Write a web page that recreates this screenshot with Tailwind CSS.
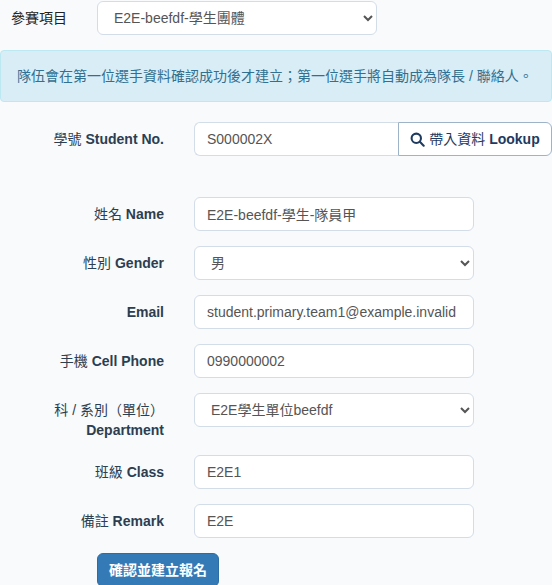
<!DOCTYPE html>
<html lang="zh-Hant">
<head>
    <meta charset="UTF-8">
    <meta name="viewport" content="width=device-width, initial-scale=1.0">
    <title>參賽報名</title>
    <script src="https://cdn.jsdelivr.net/npm/@tailwindcss/browser@4"></script>
</head>
<body class="h-[585px] overflow-hidden bg-[#f8fafc] text-[14px] leading-[20px] text-[#333] font-['Liberation_Sans','Noto_Sans_CJK_TC',sans-serif]">
    <div class="flex items-center h-[34px] mt-px">
        <label class="w-[97px] pl-[11px] font-normal text-[#222]">參賽項目</label>
        <select class="w-[280px] h-[34px] pl-[12px] pr-[6px] bg-white border border-[#d3dde8] rounded-[6px] text-[#555]">
            <option>E2E-beefdf-學生團體</option>
        </select>
    </div>

    <div class="mt-[15px] h-[52px] flex items-center px-[16px] bg-[#d9edf7] border border-[#bce8f1] rounded-[4px] text-[#31708f]">
        隊伍會在第一位選手資料確認成功後才建立；第一位選手將自動成為隊長 / 聯絡人。
    </div>

    <form class="mt-[20px]">
        <div class="flex items-center h-[34px]">
            <label class="w-[164px] text-right font-bold text-[#2c3e50]"><span class="font-normal">學號</span> Student No.</label>
            <div class="ml-[30px] flex flex-1">
                <input type="text" value="S000002X" class="w-[204px] h-[34px] px-[12px] bg-white border border-[#d3dde8] border-r-0 rounded-l-[6px] text-[#555]">
                <button type="button" class="flex-1 h-[34px] flex items-center justify-center gap-[4px] bg-white border border-[#9fb3c8] rounded-r-[6px] font-bold text-[#1f3a5f]">
                    <svg class="w-[15px] h-[15px]" viewBox="0 0 16 16" fill="none" stroke="#1f3a5f" stroke-width="2.2" stroke-linecap="round"><circle cx="6.7" cy="6.7" r="5"/><path d="M10.5 10.5 14.6 14.6"/></svg>
                    <span><span class="font-normal">帶入資料</span> Lookup</span>
                </button>
            </div>
        </div>

        <div class="flex items-center h-[34px] mt-[41px]">
            <label class="w-[164px] text-right font-bold text-[#2c3e50]"><span class="font-normal">姓名</span> Name</label>
            <input type="text" value="E2E-beefdf-學生-隊員甲" class="ml-[30px] w-[280px] h-[34px] px-[12px] bg-white border border-[#d3dde8] rounded-[6px] text-[#555]">
        </div>

        <div class="flex items-center h-[34px] mt-[15px]">
            <label class="w-[164px] text-right font-bold text-[#2c3e50]"><span class="font-normal">性別</span> Gender</label>
            <select class="ml-[30px] w-[280px] h-[34px] pl-[12px] pr-[6px] bg-white border border-[#d3dde8] rounded-[6px] text-[#555]">
                <option>男</option>
            </select>
        </div>

        <div class="flex items-center h-[34px] mt-[15px]">
            <label class="w-[164px] text-right font-bold text-[#2c3e50]">Email</label>
            <input type="text" value="student.primary.team1@example.invalid" class="ml-[30px] w-[280px] h-[34px] px-[12px] bg-white border border-[#d3dde8] rounded-[6px] text-[#555]">
        </div>

        <div class="flex items-center h-[34px] mt-[15px]">
            <label class="w-[164px] text-right font-bold text-[#2c3e50]"><span class="font-normal">手機</span> Cell Phone</label>
            <input type="text" value="0990000002" class="ml-[30px] w-[280px] h-[34px] px-[12px] bg-white border border-[#d3dde8] rounded-[6px] text-[#555]">
        </div>

        <div class="flex items-start mt-[15px]">
            <label class="w-[164px] pt-[7px] text-right font-bold text-[#2c3e50]"><span class="font-normal">科 / 系別（單位）</span><br>Department</label>
            <select class="ml-[30px] w-[280px] h-[34px] pl-[12px] pr-[6px] bg-white border border-[#d3dde8] rounded-[6px] text-[#555]">
                <option>E2E學生單位beefdf</option>
            </select>
        </div>

        <div class="flex items-center h-[34px] mt-[15px]">
            <label class="w-[164px] text-right font-bold text-[#2c3e50]"><span class="font-normal">班級</span> Class</label>
            <input type="text" value="E2E1" class="ml-[30px] w-[280px] h-[34px] px-[12px] bg-white border border-[#d3dde8] rounded-[6px] text-[#555]">
        </div>

        <div class="flex items-center h-[34px] mt-[15px]">
            <label class="w-[164px] text-right font-bold text-[#2c3e50]"><span class="font-normal">備註</span> Remark</label>
            <input type="text" value="E2E" class="ml-[30px] w-[280px] h-[34px] px-[12px] bg-white border border-[#d3dde8] rounded-[6px] text-[#555]">
        </div>

        <button type="button" class="block mt-[15px] ml-[97px] w-[122px] h-[34px] bg-[#337ab7] border border-[#2e6da4] rounded-[6px] font-bold text-white">確認並建立報名</button>
    </form>
</body>
</html>
